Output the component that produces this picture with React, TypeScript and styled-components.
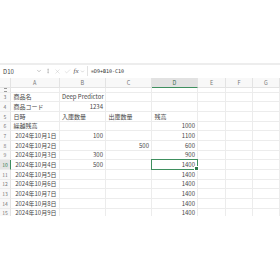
import { Fragment } from 'react';
import styled, { createGlobalStyle } from 'styled-components';
import { ChevronDown, EllipsisVertical, X, Check } from 'lucide-react';

const GlobalStyle = createGlobalStyle`
  body {
    margin: 0;
    background: #ffffff;
    font-family: 'Noto Sans CJK JP', 'Noto Sans', sans-serif;
  }
`;

const ROW_H = 29 / 3;
const COLS = ['A', 'B', 'C', 'D', 'E', 'F', 'G'];

const Page = styled.div`
  width: 280px;
  height: 280px;
  padding-top: 63px;
  box-sizing: border-box;
  overflow: hidden;
  background: #fff;
`;

const RibbonEdge = styled.div`
  height: 2px;
  background: #ededed;
`;

const FormulaBar = styled.div`
  display: flex;
  align-items: center;
  height: 12px;
  margin-bottom: 1px;
  color: #555;
`;

const NameBox = styled.div`
  display: flex;
  align-items: center;
  justify-content: space-between;
  width: 44px;
  height: 10px;
  padding: 0 2px 0 3px;
  box-sizing: border-box;
  font-size: 6px;
  color: #444;
`;

const BarIcon = styled.span<{ $muted?: boolean }>`
  display: flex;
  align-items: center;
  justify-content: center;
  width: ${(p) => (p.$muted ? 10 : 8)}px;
  color: ${(p) => (p.$muted ? '#b5b5b5' : '#777')};
`;

const Fx = styled.span`
  font-family: 'Liberation Serif', serif;
  font-style: italic;
  font-size: 7px;
  color: #555;
  width: 8px;
  text-align: center;
`;

const FormulaInput = styled.div`
  flex: 1;
  height: 10px;
  margin-left: 2px;
  padding-left: 3px;
  border-left: 1px solid #e2e2e2;
  display: flex;
  align-items: center;
  font-family: 'DejaVu Sans Mono', monospace;
  font-size: 5px;
  color: #333;
`;

const Sheet = styled.div`
  display: grid;
  grid-template-columns: 11px 48.5px 46.5px 46px 46px 28px 27px 1fr;
  height: 138px;
  overflow: hidden;
  align-content: start;
`;

const ColHead = styled.div<{ $active?: boolean }>`
  height: 10px;
  box-sizing: border-box;
  display: flex;
  align-items: center;
  justify-content: center;
  font-size: 5.5px;
  color: ${(p) => (p.$active ? '#3c6e50' : '#777')};
  background: ${(p) => (p.$active ? '#e2e2e2' : '#f8f8f8')};
  border-right: 1px solid #e3e3e3;
  border-bottom: 1px solid ${(p) => (p.$active ? '#3f8f5f' : '#e3e3e3')};
`;

const RowHead = styled.div<{ $active?: boolean; $h: number }>`
  height: ${(p) => p.$h}px;
  box-sizing: border-box;
  display: flex;
  align-items: center;
  justify-content: center;
  font-size: 5px;
  color: ${(p) => (p.$active ? '#2f7a4c' : '#777')};
  background: ${(p) => (p.$active ? '#e4e4e4' : '#f8f8f8')};
  border-right: 1px solid ${(p) => (p.$active ? '#3f8f5f' : '#e3e3e3')};
  border-bottom: 1px solid #ececec;
`;

const Cell = styled.div<{ $right?: boolean; $h: number }>`
  height: ${(p) => p.$h}px;
  box-sizing: border-box;
  display: flex;
  align-items: center;
  justify-content: ${(p) => (p.$right ? 'flex-end' : 'flex-start')};
  padding: 0 2px 0 2.5px;
  font-size: 6px;
  color: #484848;
  white-space: nowrap;
  overflow: visible;
  border-right: 1px solid #ececec;
  border-bottom: 1px solid #ececec;
`;

const SelectedCell = styled(Cell)`
  position: relative;
  border: 1px solid #3f8f5f;
  margin: -1px 0 0 -1px;
  height: ${(p) => p.$h + 1}px;
`;

const Handle = styled.span`
  position: absolute;
  right: -2px;
  bottom: -2px;
  width: 3px;
  height: 3px;
  background: #2f7a4c;
  border: 0.5px solid #fff;
`;

const TinyMark = styled.span`
  display: block;
  width: 3px;
  height: 2px;
  border-top: 0.5px solid #999;
  border-bottom: 0.5px solid #999;
`;

type Val = string | number | null;

const dates = Array.from({ length: 9 }, (_, i) => `2024年10月${i + 1}日`);
const inbound: Val[] = [100, null, 300, 500, null, null, null, null, null];
const outbound: Val[] = [null, 500, null, null, null, null, null, null, null];
const balance = [1100, 600, 900, 1400, 1400, 1400, 1400, 1400, 1400];

const rows: { n: number; cells: Val[]; right: boolean[] }[] = [
  { n: 3, cells: ['商品名', 'Deep Predictor', null, null], right: [false, false, false, false] },
  { n: 4, cells: ['商品コード', 1234, null, null], right: [false, true, false, false] },
  { n: 5, cells: ['日時', '入庫数量', '出庫数量', '残高'], right: [false, false, false, false] },
  { n: 6, cells: ['繰越残高', null, null, 1000], right: [false, false, false, true] },
  ...dates.map((d, i) => ({
    n: 7 + i,
    cells: [d, inbound[i], outbound[i], balance[i]] as Val[],
    right: [true, true, true, true],
  })),
];

export default function App() {
  return (
    <>
      <GlobalStyle />
      <Page>
        <RibbonEdge />
        <FormulaBar>
          <NameBox>
            D10
            <ChevronDown size={6} strokeWidth={1.5} color="#666" />
          </NameBox>
          <BarIcon>
            <EllipsisVertical size={6} strokeWidth={2} color="#999" />
          </BarIcon>
          <BarIcon $muted>
            <X size={7} strokeWidth={1.2} />
          </BarIcon>
          <BarIcon $muted>
            <Check size={7} strokeWidth={1.2} />
          </BarIcon>
          <Fx>fx</Fx>
          <ChevronDown size={5} strokeWidth={1.5} color="#888" />
          <FormulaInput>=D9+B10-C10</FormulaInput>
        </FormulaBar>
        <Sheet>
          <ColHead />
          {COLS.map((c) => (
            <ColHead key={c} $active={c === 'D'}>
              {c}
            </ColHead>
          ))}

          <RowHead $h={4.67}>
            <TinyMark />
          </RowHead>
          {COLS.map((c) => (
            <Cell key={`h-${c}`} $h={4.67} />
          ))}

          {rows.map((r) => (
            <Fragment key={`r${r.n}`}>
              <RowHead $h={ROW_H} $active={r.n === 10}>
                {r.n}
              </RowHead>
              {COLS.map((c, ci) => {
                const v = ci < 4 ? r.cells[ci] : null;
                const right = ci < 4 ? r.right[ci] : false;
                if (r.n === 10 && c === 'D') {
                  return (
                    <SelectedCell key={c} $h={ROW_H} $right>
                      {v}
                      <Handle />
                    </SelectedCell>
                  );
                }
                return (
                  <Cell key={c} $h={ROW_H} $right={right}>
                    {v}
                  </Cell>
                );
              })}
            </Fragment>
          ))}
        </Sheet>
      </Page>
    </>
  );
}
